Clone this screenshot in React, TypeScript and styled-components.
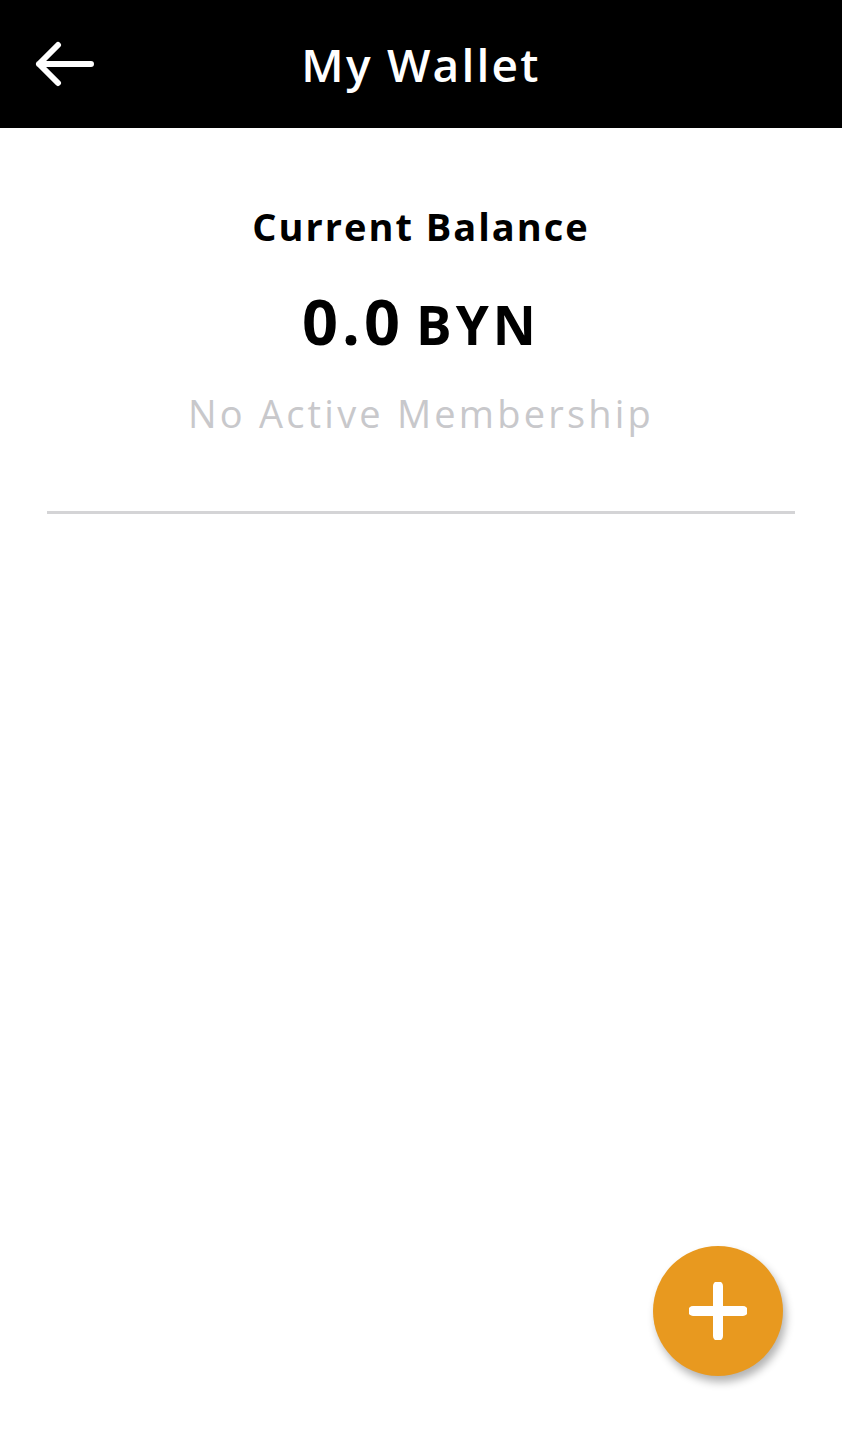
import React from "react";
import styled, { createGlobalStyle } from "styled-components";

const Global = createGlobalStyle`
  html, body { margin: 0; padding: 0; background: #ffffff; }
  body { font-family: "Open Sans", "Liberation Sans", sans-serif; }
  * { box-sizing: border-box; }
`;

const Screen = styled.div`
  position: relative;
  width: 842px;
  height: 1440px;
  background: #ffffff;
  display: flex;
  flex-direction: column;
  overflow: hidden;
`;

const Header = styled.header`
  height: 128px;
  flex: none;
  background: #000000;
  display: grid;
  grid-template-columns: 128px 1fr 128px;
  align-items: center;
`;

const BackButton = styled.button`
  background: none;
  border: none;
  padding: 0 0 0 35px;
  height: 100%;
  display: flex;
  align-items: center;
  cursor: pointer;
`;

const Title = styled.h1`
  margin: 0;
  text-align: center;
  color: #ffffff;
  font-family: "Open Sans", sans-serif;
  font-weight: 600;
  font-size: 46px;
  letter-spacing: 2.2px;
  line-height: 1;
`;

const Content = styled.main`
  padding: 0 47px;
`;

const BalanceWrap = styled.section`
  display: flex;
  flex-direction: column;
  align-items: center;
  padding-top: 79px;
`;

const Label = styled.h2`
  margin: 0;
  font-family: "Open Sans", sans-serif;
  font-weight: 700;
  font-size: 38px;
  letter-spacing: 2px;
  line-height: 1;
  color: #000;
`;

const Amount = styled.div`
  margin-top: 44px;
  display: flex;
  align-items: baseline;
  gap: 12px;
  color: #000;
  font-family: "Open Sans", sans-serif;
  font-weight: 700;
  line-height: 1;
`;

const Value = styled.span<{ $size: number; $spacing: number }>`
  font-size: ${(p) => p.$size}px;
  letter-spacing: ${(p) => p.$spacing}px;
`;

const Status = styled.p`
  margin: 42px 0 0;
  font-family: "Open Sans", sans-serif;
  font-weight: 400;
  font-size: 38px;
  letter-spacing: 3.2px;
  line-height: 1;
  color: #c8c8cb;
`;

const Divider = styled.hr`
  margin: 79px 0 0;
  border: none;
  height: 3px;
  background: #d4d4d6;
`;

const Fab = styled.button`
  position: absolute;
  left: 653px;
  top: 1246px;
  width: 130px;
  height: 130px;
  border-radius: 50%;
  border: none;
  background: #e8991f;
  box-shadow: 3px 6px 8px rgba(0, 0, 0, 0.3);
  display: flex;
  align-items: center;
  justify-content: center;
  cursor: pointer;
`;

function BalanceBlock() {
  return (
    <BalanceWrap>
      <Label>Current Balance</Label>
      <Amount>
        <Value $size={63} $spacing={4}>0.0</Value>
        <Value $size={53} $spacing={4}>BYN</Value>
      </Amount>
      <Status>No Active Membership</Status>
    </BalanceWrap>
  );
}

export default function App() {
  return (
    <Screen>
      <Global />
      <Header>
        <BackButton aria-label="Back">
          <svg width="60" height="46" viewBox="0 0 60 46" fill="none">
            <path
              d="M56 23 H4 M23 4 L4 23 L23 42"
              stroke="#fff"
              strokeWidth="6"
              strokeLinecap="round"
              strokeLinejoin="round"
            />
          </svg>
        </BackButton>
        <Title>My Wallet</Title>
        <div />
      </Header>
      <Content>
        <BalanceBlock />
        <Divider />
      </Content>
      <Fab aria-label="Add">
        <svg width="58" height="58" viewBox="0 0 58 58" fill="none">
          <path d="M29 4 V54 M4 29 H54" stroke="#fff" strokeWidth="10" strokeLinecap="round" />
        </svg>
      </Fab>
    </Screen>
  );
}
